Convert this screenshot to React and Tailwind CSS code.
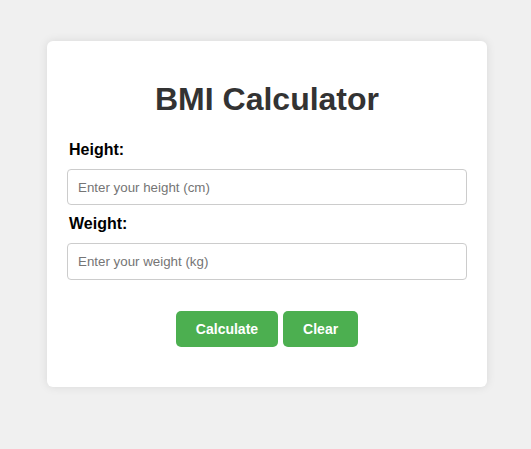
import React, { useState } from "react";

// Calculadora de IMC: tarjeta centrada con dos campos y dos botones
export default function App() {
    const [altura, setAltura] = useState("");
    const [peso, setPeso] = useState("");

    const limpiar = () => {
        setAltura("");
        setPeso("");
    };

    return (
        <div className="min-h-[449px] bg-[#f0f0f0] flex justify-center pl-[3px] pt-[41px] font-['Liberation_Sans',Arial,sans-serif]">
            <div className="w-[440px] h-fit bg-white rounded-[6px] shadow-[0_0_10px_rgba(0,0,0,0.1)] px-5 pt-5 pb-10">
                <h1 className="text-center text-[32px] font-bold leading-[37px] text-[#333] mt-[20px] mb-[23px]">
                    BMI Calculator
                </h1>

                <label className="block ml-[2px] text-[16px] font-bold leading-[18px] text-black mb-[10px]">Height:</label>
                <input
                    type="number"
                    value={altura}
                    onChange={(e) => setAltura(e.target.value)}
                    placeholder="Enter your height (cm)"
                    className="block w-full h-[36px] px-[10px] border border-[#ccc] rounded-[4px] text-[13.333px] text-black placeholder:text-[#757575] outline-none mb-[10px]"
                />

                <label className="block ml-[2px] text-[16px] font-bold leading-[18px] text-black mb-[10px]">Weight:</label>
                <input
                    type="number"
                    value={peso}
                    onChange={(e) => setPeso(e.target.value)}
                    placeholder="Enter your weight (kg)"
                    className="block w-full h-[37px] px-[10px] border border-[#ccc] rounded-[4px] text-[13.333px] text-black placeholder:text-[#757575] outline-none"
                />

                <div className="flex justify-center gap-[5px] mt-[31px]">
                    <button type="button" className="h-[36px] px-5 bg-[#4CAF50] text-white text-[14px] font-bold rounded-[5px] cursor-pointer">
                        Calculate
                    </button>
                    <button type="button" onClick={limpiar} className="h-[36px] px-5 bg-[#4CAF50] text-white text-[14px] font-bold rounded-[5px] cursor-pointer">
                        Clear
                    </button>
                </div>
            </div>
        </div>
    );
}
